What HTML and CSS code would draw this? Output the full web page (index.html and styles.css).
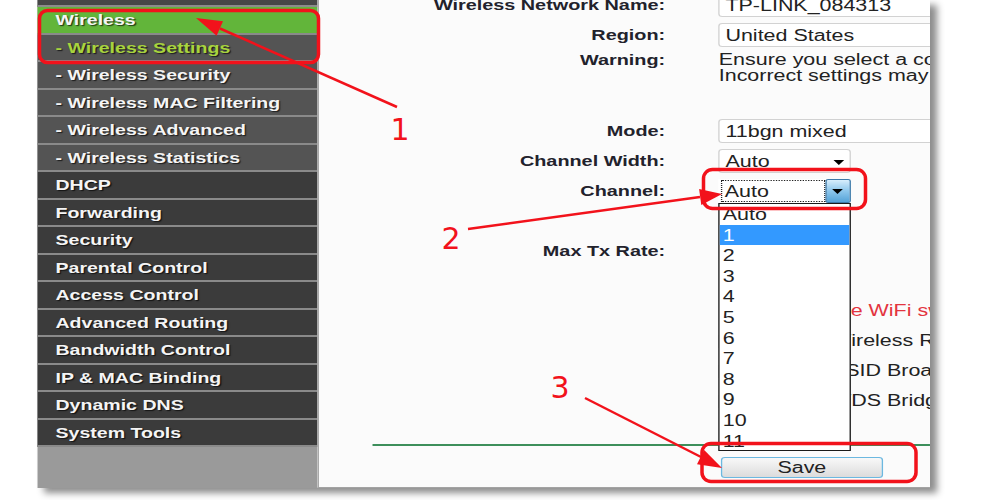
FILE: index.html
```html
<!DOCTYPE html>
<html lang="en">
<head>
    <meta charset="UTF-8">
    <meta name="viewport" content="width=device-width, initial-scale=1.0">
    <title>Wireless Settings</title>
    <link rel="stylesheet" href="styles.css">
</head>
<body>
    <div class="stage">
        <div class="panel">
            <div class="menu">
                <div class="menu-top"></div>
                <div class="item active">Wireless</div>
                <div class="item sub current">- Wireless Settings</div>
                <div class="item sub">- Wireless Security</div>
                <div class="item sub">- Wireless MAC Filtering</div>
                <div class="item sub">- Wireless Advanced</div>
                <div class="item sub">- Wireless Statistics</div>
                <div class="item">DHCP</div>
                <div class="item">Forwarding</div>
                <div class="item">Security</div>
                <div class="item">Parental Control</div>
                <div class="item">Access Control</div>
                <div class="item">Advanced Routing</div>
                <div class="item">Bandwidth Control</div>
                <div class="item">IP &amp; MAC Binding</div>
                <div class="item">Dynamic DNS</div>
                <div class="item">System Tools</div>
            </div>

            <div class="content">
                <div class="form">
                    <div class="row">
                        <label>Wireless Network Name:</label>
                        <div class="box">TP-LINK_084313</div>
                    </div>
                    <div class="row">
                        <label>Region:</label>
                        <div class="box">United States</div>
                    </div>
                    <div class="row warn">
                        <label>Warning:</label>
                        <div class="warn-text">Ensure you select a correct country to conform local law.<br>Incorrect settings may cause interference.</div>
                    </div>
                    <div class="row">
                        <label>Mode:</label>
                        <div class="box">11bgn mixed</div>
                    </div>
                    <div class="row">
                        <label>Channel Width:</label>
                        <div class="box select">Auto<i class="caret"></i></div>
                    </div>
                    <div class="row">
                        <label>Channel:</label>
                        <div class="combo">
                            <span class="combo-value">Auto</span>
                            <span class="combo-btn"><i class="caret"></i></span>
                            <ul class="options">
                                <li>Auto</li>
                                <li class="hl">1</li>
                                <li>2</li>
                                <li>3</li>
                                <li>4</li>
                                <li>5</li>
                                <li>6</li>
                                <li>7</li>
                                <li>8</li>
                                <li>9</li>
                                <li>10</li>
                                <li>11</li>
                                <li>12</li>
                            </ul>
                        </div>
                    </div>
                    <div class="row tall">
                        <label>Max Tx Rate:</label>
                        <div></div>
                    </div>
                    <div class="row">
                        <label></label>
                        <div class="note">Make sure the WiFi switch is on.</div>
                    </div>
                    <div class="row">
                        <label></label>
                        <div class="check"><span class="cb"></span>Enable Wireless Router Radio</div>
                    </div>
                    <div class="row">
                        <label></label>
                        <div class="check"><span class="cb"></span>Enable SSID Broadcast</div>
                    </div>
                    <div class="row">
                        <label></label>
                        <div class="check"><span class="cb"></span>Enable WDS Bridging</div>
                    </div>

                    <div class="divider"></div>

                    <div class="row save-row">
                        <label></label>
                        <button type="button" class="save">Save</button>
                    </div>
                </div>
            </div>
        </div>
    </div>

    <!-- step callouts drawn over the page -->
    <svg class="marks" width="1000" height="500" viewBox="0 0 1000 500">
        <g fill="none" stroke="#f2121b" stroke-width="3.5">
            <rect x="39.5" y="10.5" width="279" height="52" rx="8"/>
            <rect x="703.5" y="169.5" width="162" height="39" rx="9"/>
            <rect x="702" y="443.5" width="214" height="38" rx="9"/>
        </g>
        <g stroke="#f2121b" stroke-width="2.5">
            <line x1="397" y1="107" x2="220" y2="28.5"/>
            <line x1="468" y1="229" x2="700" y2="197"/>
            <line x1="585" y1="398" x2="701" y2="457"/>
        </g>
        <g fill="#f2121b">
            <polygon points="196,18 223,21.2 216.6,35.8"/>
            <polygon points="722,194 699.1,189.1 701.3,204.9"/>
            <polygon points="722,468 704.2,450 697,464.2"/>
        </g>
        <g fill="#f2121b" font-family="DejaVu Sans, sans-serif" font-size="30" text-anchor="middle">
            <text x="400" y="140">1</text>
            <text x="451" y="249">2</text>
            <text x="560" y="398">3</text>
        </g>
    </svg>
</body>
</html>
```

FILE: styles.css
```css
body {
    margin: 0;
    height: 500px;
    position: relative;
    overflow: hidden;
    background: #fff;
    font-family: "Liberation Sans", Arial, sans-serif;
}

/* the router page is shown widened, so it is laid out narrow and stretched */
.stage {
    width: 746px;
    height: 500px;
    transform: scaleX(1.34);
    transform-origin: 0 0;
}

.panel {
    display: flex;
    width: 665.6px;
    height: 488px;
    margin-left: 28.4px;
    box-shadow: 5px 5px 6px rgba(0,0,0,0.45);
}

/* left menu */
.menu {
    width: 209px;
    background: #9a9a9a;
}
.menu-top {
    height: 5px;
    background: #474747;
    border-bottom: 2px solid #8c8c8c;
}
.item {
    height: 25.5px;
    line-height: 27px;
    overflow: hidden;
    padding-left: 13px;
    border-bottom: 2px solid #8a8a8a;
    background: #3b3b3b;
    color: #f5f5f5;
    font-size: 14.6px;
    font-weight: bold;
    white-space: nowrap;
    text-shadow: 1px 1px 1px rgba(0,0,0,0.7);
}
.item.sub {
    background: #545454;
}
.item.active {
    background: #62b53a;
}
.item.current {
    color: #a8d43e;
}

/* settings form */
.content {
    flex: 1;
    position: relative;
    overflow: hidden;
    background: #fbfbfb;
    border-left: 1.5px solid #a3a3a3;
    border-bottom: 1.5px solid #a3a3a3;
    color: #222;
}
.form {
    margin-top: -10px;
}
.row {
    display: grid;
    grid-template-columns: 258px 1fr;
    column-gap: 40px;
    align-items: center;
    height: 30px;
    font-size: 16px;
    white-space: nowrap;
}
.row label {
    text-align: right;
    font-size: 14.8px;
    font-weight: bold;
    color: #22222c;
}
.row.warn {
    height: 66px;
    align-items: start;
}
.row.warn label,
.warn-text {
    padding-top: 2px;
    line-height: 16px;
}
.row.tall {
    height: 90px;
}

.box {
    position: relative;
    width: 220px;
    height: 24px;
    box-sizing: border-box;
    padding: 1px 0 0 4px;
    line-height: 22px;
    background: #fff;
    border: 1px solid #d2d2d2;
    border-radius: 3px;
}
.box.select {
    width: 98.5px;
}
.caret {
    display: block;
    width: 0;
    height: 0;
    border-left: 4px solid transparent;
    border-right: 4px solid transparent;
    border-top: 5px solid #000;
}
.box.select .caret {
    position: absolute;
    right: 4px;
    top: 10px;
}

/* channel list, opened */
.combo {
    position: relative;
    display: flex;
    width: 98.5px;
    height: 24px;
    background: #fff;
}
.combo-value {
    flex: 1;
    margin: 1px 0 1px 1.5px;
    padding: 1px 0 0 2px;
    line-height: 19px;
    border: 1px dotted #222;
}
.combo-btn {
    display: flex;
    align-items: center;
    justify-content: center;
    width: 19.4px;
    box-sizing: border-box;
    border: 1px solid #3b79a9;
    border-radius: 2px;
    background: linear-gradient(#d8eefc, #8cc6ec 50%, #55a3d8);
}
.options {
    position: absolute;
    top: 24px;
    left: 0;
    z-index: 2;
    width: 98.5px;
    height: 248px;
    box-sizing: border-box;
    margin: 0;
    padding: 0;
    list-style: none;
    overflow: hidden;
    background: #fff;
    border: 1px solid #1a1a1a;
}
.options li {
    height: 20.6px;
    line-height: 21.6px;
    padding-left: 2px;
}
.options li.hl {
    background: #3399ff;
    color: #fff;
}

.note {
    padding-left: 6px;
    color: #e3343f;
}
.check {
    display: flex;
    align-items: center;
}
.cb {
    width: 13px;
    height: 13px;
    margin: 0 16.5px 0 0;
    border: 1px solid #888;
    box-sizing: border-box;
}

.divider {
    height: 1.5px;
    margin: 28px 0 0 39.5px;
    background: #3d8f5b;
}
.save-row {
    height: auto;
    margin-top: 11.5px;
}
.save {
    width: 121px;
    height: 21px;
    margin-left: 1.5px;
    padding: 0;
    font-family: "Liberation Sans", Arial, sans-serif;
    font-size: 16px;
    color: #222;
    background: linear-gradient(#f8f8f8, #dcdcdc);
    border: 1px solid #6cb8e0;
    border-radius: 3px;
}

.marks {
    position: absolute;
    top: 0;
    left: 0;
    pointer-events: none;
}
```
